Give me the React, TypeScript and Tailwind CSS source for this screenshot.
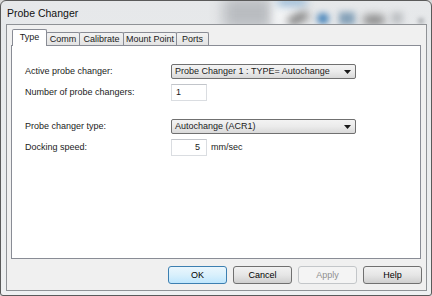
import type { ReactNode } from "react";

function Tab({ label, w, active, first }: { label: string; w: string; active?: boolean; first?: boolean }) {
  if (active) {
    return (
      <div
        className={`${w} relative z-10 h-[17px] -mb-[1px] flex items-start justify-center pt-[3px] border border-b-0 border-[#898c95] bg-white rounded-t-[2px] ${first ? "" : "-ml-[1px]"}`}
      >
        {label}
      </div>
    );
  }
  return (
    <div
      className={`${w} h-[13px] flex items-center justify-center border border-b-0 border-[#898c95] bg-gradient-to-b from-[#f2f2f2] to-[#e3e3e3] rounded-t-[2px] ${first ? "" : "-ml-[1px]"}`}
    >
      {label}
    </div>
  );
}

function Select({ value }: { value: string }) {
  return (
    <div className="w-[185px] h-[15px] flex items-center justify-between pl-[3px] pr-[4px] border border-[#707070] rounded-[2px] bg-gradient-to-b from-[#f3f3f3] via-[#ebebeb] to-[#d9d9d9]">
      <span>{value}</span>
      <svg width="7" height="4" viewBox="0 0 7 4">
        <path d="M0 0H7L3.5 4Z" fill="#1a1a1a" />
      </svg>
    </div>
  );
}

function Field({ value, right, children }: { value: string; right?: boolean; children?: ReactNode }) {
  return (
    <div className="flex items-center">
      <div
        className={`w-[36px] h-[17px] flex items-center bg-white border border-[#dadde1] border-t-[#c2c5ca] ${right ? "justify-end pr-[6px]" : "pl-[4px]"}`}
      >
        {value}
      </div>
      {children}
    </div>
  );
}

function Row({ label, className, children }: { label: string; className?: string; children: ReactNode }) {
  return (
    <div className={`flex items-center ${className ?? ""}`}>
      <div className="w-[159px] shrink-0 pl-[13px]">{label}</div>
      {children}
    </div>
  );
}

function Btn({ label, kind }: { label: string; kind?: "default" | "disabled" }) {
  const look =
    kind === "default"
      ? "border-[#3c7fb1] bg-gradient-to-b from-[#eaf6fd] via-[#d9f0fc] to-[#bee6fd] text-black"
      : kind === "disabled"
        ? "border-[#c3c6c9] bg-[#f4f4f4] text-[#8f8f8f]"
        : "border-[#707070] bg-gradient-to-b from-[#f2f2f2] via-[#e6e6e6] to-[#cfcfcf] text-black";
  return (
    <div className={`w-[59px] h-[18px] flex items-center justify-center border rounded-[3px] ${look}`}>
      {label}
    </div>
  );
}

export default function App() {
  return (
    <div className="w-[432px] h-[296px] bg-[#d9d9d9] font-['Liberation_Sans',Arial,sans-serif] text-[9px] text-[#1b1b1b] leading-none">
      <div className="relative w-full h-full overflow-hidden rounded-t-[6px] rounded-b-[3px] border border-[#5a5a5a] bg-gradient-to-b from-[#e6e8ea] to-[#eef0f1]">
        {/* blurred desktop behind the glass frame */}
        <div className="absolute left-[222px] top-[-4px] w-[50px] h-[32px] bg-[#b9bcc0] blur-[7px]" />
        <div className="absolute left-[272px] top-[-4px] w-[30px] h-[32px] bg-[#f4f5f6] blur-[5px]" />
        <div className="absolute left-[276px] top-[-3px] w-[30px] h-[8px] bg-[#8fb3d2] blur-[4px] rounded-full" />
        <div className="absolute left-[286px] top-[13px] w-[22px] h-[9px] bg-[#7a7a7a] blur-[4px] rounded-full -rotate-[25deg]" />
        <div className="absolute left-[316px] top-[12px] w-[12px] h-[11px] bg-[#4a86bb] blur-[3px] rounded-full" />
        <div className="absolute left-[338px] top-[11px] w-[16px] h-[13px] bg-[#86a2b9] blur-[3px]" />
        <div className="absolute left-[362px] top-[14px] w-[22px] h-[10px] bg-[#858585] blur-[4px] rounded-full" />
        <div className="absolute left-[390px] top-[11px] w-[12px] h-[12px] bg-[#bfc2c5] blur-[3px]" />
        <div className="absolute left-[417px] top-[17px] w-[6px] h-[6px] bg-[#a9acb0] blur-[2px] rounded-full" />

        <div className="relative h-[23px] pl-[6px] pt-[1px] flex items-center text-[10.5px] text-[#111]">Probe Changer</div>

        <div className="relative ml-[5px] w-[421px] h-[267px] border border-[#8f9296] bg-[#f0f0f0] flex flex-col">
          <div className="flex items-end h-[20px] pt-[4px] pl-[5px]">
            <Tab label="Type" w="w-[35px]" active first />
            <Tab label="Comm" w="w-[34px]" />
            <Tab label="Calibrate" w="w-[45px]" />
            <Tab label="Mount Point" w="w-[54px]" />
            <Tab label="Ports" w="w-[33px]" />
          </div>

          <div className="ml-[4px] w-[410px] h-[214px] border border-[#898c95] bg-white pt-[18px]">
            <Row label="Active probe changer:">
              <Select value="Probe Changer 1 : TYPE= Autochange" />
            </Row>
            <Row label="Number of probe changers:" className="mt-[5px]">
              <Field value="1" />
            </Row>
            <Row label="Probe changer type:" className="mt-[18px]">
              <Select value="Autochange (ACR1)" />
            </Row>
            <Row label="Docking speed:" className="mt-[5px]">
              <Field value="5" right>
                <span className="ml-[4px]">mm/sec</span>
              </Field>
            </Row>
          </div>

          <div className="flex justify-end gap-[6px] pr-[4px] mt-[7px]">
            <Btn label="OK" kind="default" />
            <Btn label="Cancel" />
            <Btn label="Apply" kind="disabled" />
            <Btn label="Help" />
          </div>
        </div>
      </div>
    </div>
  );
}
